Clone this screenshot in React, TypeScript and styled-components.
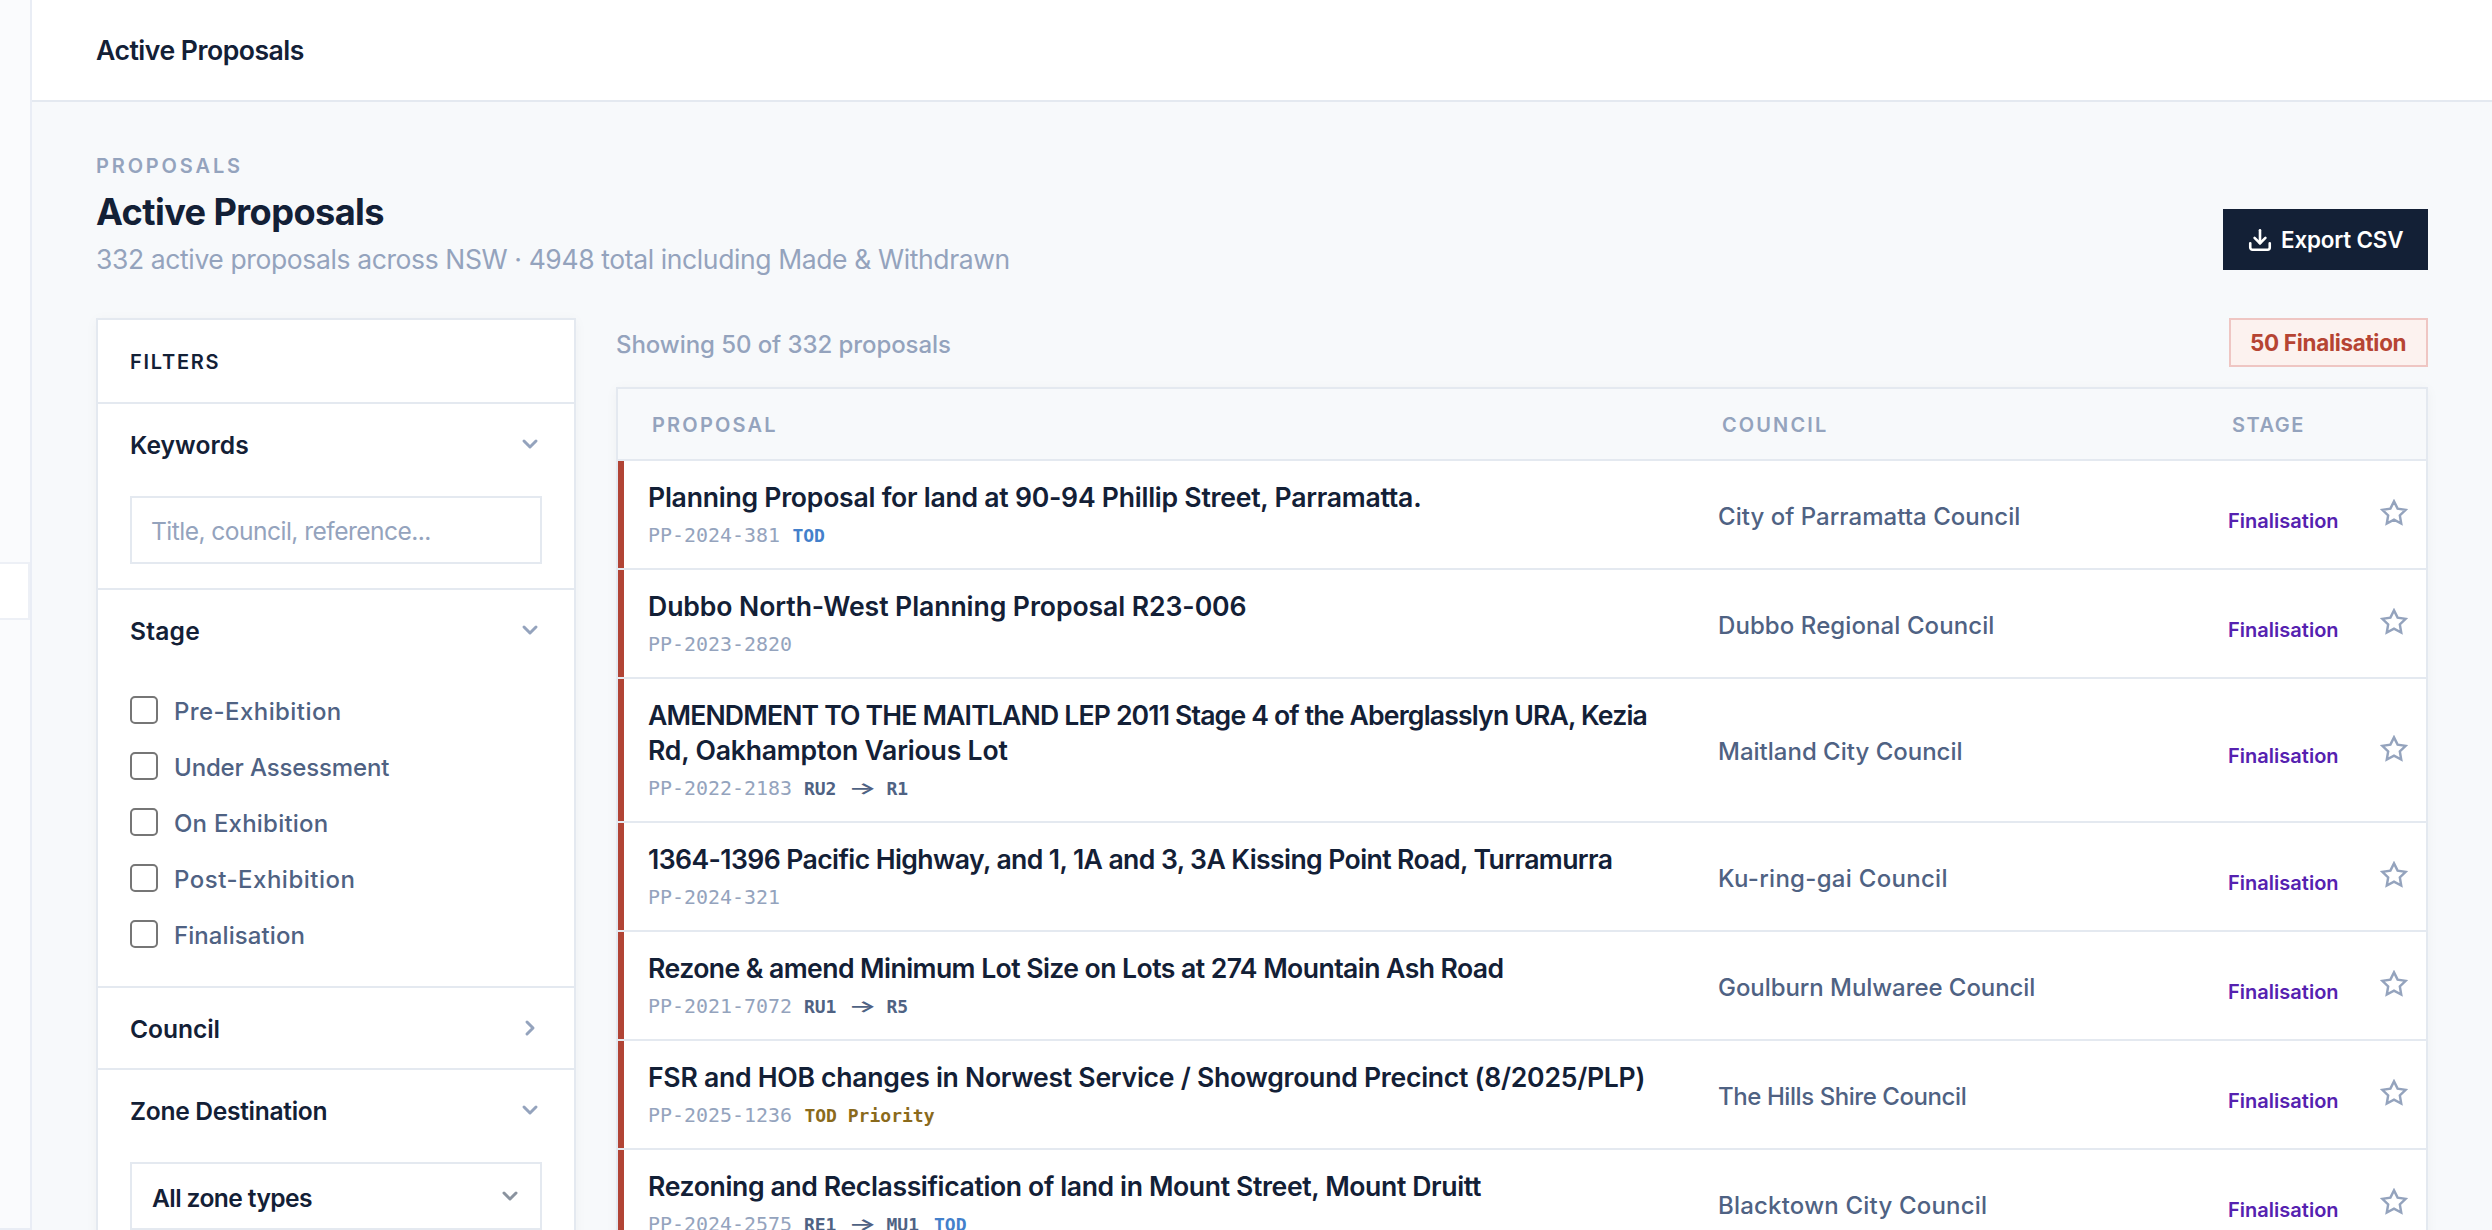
import React from "react";
import styled, { createGlobalStyle } from "styled-components";
import { ChevronDown, ChevronRight, Download } from "lucide-react";

const ink = "#132036";
const slate = "#4f6283";
const muted = "#94a3bd";
const line = "#e4e9f0";

const GlobalStyle = createGlobalStyle`
  *, *::before, *::after { box-sizing: border-box; }
  html, body { margin: 0; height: 1230px; overflow: hidden; background: #f7f9fb; }
  body { font-family: "Inter", "Noto Sans", sans-serif; color: ${ink}; }
  button, input { font-family: inherit; }
`;

const Shell = styled.div`
  display: flex;
  height: 1230px;
  overflow: hidden;
`;

const Sidebar = styled.aside`
  flex: none;
  width: 32px;
  padding-top: 562px;
  background: #fafbfd;
  border-right: 2px solid #e9edf5;
  border-bottom: 2px solid #e9edf5;
`;

const SidebarActiveItem = styled.div`
  height: 58px;
  background: #fff;
  border: 2px solid #edf0f6;
  border-left: 0;
`;

const Main = styled.main`
  flex: 1;
  min-width: 0;
  display: flex;
  flex-direction: column;
`;

const TopBar = styled.header`
  flex: none;
  display: flex;
  align-items: center;
  height: 102px;
  padding: 0 64px;
  background: #fff;
  border-bottom: 2px solid ${line};
  font-size: 26.6px;
  font-weight: 600;
  letter-spacing: -0.5px;
`;

const Content = styled.div`
  padding: 52px 64px 0;
`;

const PageHead = styled.div`
  display: flex;
  align-items: flex-end;
  justify-content: space-between;
  margin-bottom: 48px;
`;

const Eyebrow = styled.div`
  font-size: 20px;
  line-height: 24px;
  font-weight: 600;
  letter-spacing: 2.85px;
  color: ${muted};
`;

const PageTitle = styled.h1`
  margin: 12px 0 14px;
  font-size: 36.2px;
  line-height: 44px;
  font-weight: 700;
  letter-spacing: -0.6px;
`;

const Subtitle = styled.p`
  margin: 0;
  font-size: 26.5px;
  line-height: 22px;
  letter-spacing: -0.385px;
  white-space: nowrap;
  color: ${muted};
`;

const ExportButton = styled.button`
  display: flex;
  align-items: center;
  gap: 8px;
  width: 205px;
  height: 61px;
  padding: 0 0 0 24px;
  border: 0;
  background: ${ink};
  color: #fff;
  font-size: 22.4px;
  font-weight: 600;
  letter-spacing: -0.18px;
  white-space: nowrap;
`;

const Columns = styled.div`
  display: grid;
  grid-template-columns: 480px 1fr;
  gap: 40px;
  align-items: start;
`;

const Panel = styled.section`
  background: #fff;
  border: 2px solid ${line};
  box-shadow: 0 2px 12px rgba(15, 23, 42, 0.04);
`;

const FiltersHeading = styled.h2`
  display: flex;
  align-items: center;
  height: 84px;
  margin: 0;
  padding: 1px 32px 0;
  border-bottom: 2px solid ${line};
  font-size: 20px;
  font-weight: 600;
  letter-spacing: 1.75px;
`;

const FilterGroup = styled.div`
  border-bottom: 2px solid ${line};
`;

const GroupToggle = styled.button<{ $tracking: number }>`
  display: flex;
  align-items: center;
  justify-content: space-between;
  width: 100%;
  height: 80px;
  padding: 0 32px;
  border: 0;
  background: none;
  color: ${ink};
  font-size: 24.6px;
  font-weight: 600;
  letter-spacing: ${(p) => p.$tracking}px;

  span { padding-top: 2px; }
  svg { color: ${muted}; }
`;

const GroupBody = styled.div`
  padding: 12px 32px 24px;
`;

const KeywordInput = styled.input`
  display: block;
  width: 100%;
  height: 68px;
  padding: 2px 20px 0 19px;
  border: 2px solid ${line};
  border-radius: 0;
  background: #fff;
  font-size: 24.6px;
  letter-spacing: -0.55px;
  outline: none;

  &::placeholder { color: ${muted}; opacity: 1; }
`;

const SelectBox = styled.button`
  display: flex;
  align-items: center;
  justify-content: space-between;
  width: 100%;
  height: 68px;
  padding: 0 18px 0 20px;
  border: 2px solid ${line};
  background: #fff;
  color: ${ink};
  font-size: 24.6px;
  font-weight: 600;
  letter-spacing: -0.6px;

  span { padding-top: 3px; }
  svg { color: #8a939f; }
`;

const CheckRow = styled.label<{ $tracking: number }>`
  display: flex;
  align-items: center;
  gap: 16px;
  height: 56px;
  color: ${slate};
  font-size: 24px;
  font-weight: 500;
  letter-spacing: ${(p) => p.$tracking}px;

  span { padding-top: 2px; }
`;

const Checkbox = styled.input`
  appearance: none;
  width: 28px;
  height: 28px;
  margin: 0;
  border: 2px solid #767676;
  border-radius: 5px;
  background: #fff;
`;

const ResultsBar = styled.div`
  display: flex;
  align-items: center;
  justify-content: space-between;
  height: 49px;
  margin-bottom: 20px;
  color: ${muted};
  font-size: 24px;
  font-weight: 500;
  letter-spacing: -0.07px;

  > span { padding-top: 3px; }
`;

const StageBadge = styled.div`
  display: flex;
  align-items: center;
  width: 199px;
  height: 49px;
  padding-left: 19px;
  border: 2px solid #efc6c3;
  background: #fcf2ef;
  color: #b64433;
  font-size: 22.4px;
  font-weight: 700;
  letter-spacing: -0.28px;
  white-space: nowrap;
`;

const TableHead = styled.div`
  display: grid;
  grid-template-columns: 1070px 510px 1fr;
  align-items: center;
  height: 72px;
  padding: 1px 0 0 34px;
  border-bottom: 2px solid ${line};
  background: #f7f9fb;
  color: ${muted};
  font-size: 20px;
  font-weight: 600;
`;

const HeadCell = styled.div<{ $tracking: number }>`
  letter-spacing: ${(p) => p.$tracking}px;
`;

const Row = styled.div`
  position: relative;
  display: grid;
  grid-template-columns: 1070px 510px 1fr 28px;
  align-items: center;
  padding: 0 18px 0 30px;
  border-bottom: 2px solid ${line};

  &::before {
    content: "";
    position: absolute;
    left: 0;
    top: 0;
    bottom: 0;
    width: 6px;
    background: #b14435;
  }
`;

const ProposalCell = styled.div`
  padding: 19px 40px 19.4px 0;
`;

const ProposalTitle = styled.div<{ $tracking: number }>`
  font-size: 26.6px;
  line-height: 34.7px;
  font-weight: 600;
  letter-spacing: ${(p) => p.$tracking}px;
`;

const TitleLine = styled.span<{ $tracking: number }>`
  display: block;
  letter-spacing: ${(p) => p.$tracking}px;
`;

const Meta = styled.div`
  display: flex;
  align-items: baseline;
  height: 26px;
  margin-top: 8px;
  line-height: 26px;
  font-family: "DejaVu Sans Mono", monospace;
  font-size: 19.93px;
  color: ${muted};
  white-space: pre;
`;

const Tag = styled.span<{ $color: string; $gap: number }>`
  margin-left: ${(p) => p.$gap}px;
  color: ${(p) => p.$color};
  font-size: 18px;
  font-weight: 700;
`;

const Arrow = styled.span`
  display: inline-block;
  width: 50px;
  padding-left: 2px;
  text-align: center;
  font-family: "Inter", sans-serif;
  font-weight: 600;
  line-height: 20px;

  span { display: inline-block; transform: scale(1.66, 0.9); }
`;

const CouncilCell = styled.div<{ $tracking: number }>`
  padding-top: 3px;
  color: ${slate};
  font-size: 24px;
  font-weight: 500;
  letter-spacing: ${(p) => p.$tracking}px;
`;

const StageCell = styled.div`
  padding-top: 12px;
  color: #5521b0;
  font-size: 20px;
  font-weight: 600;
  letter-spacing: 0.02px;
`;

const StarIcon = styled.svg`
  display: block;
  width: 28px;
  height: 28px;
  margin-bottom: 3px;
  fill: none;
  stroke: ${muted};
  stroke-width: 2.1;
`;

type Proposal = {
  title: React.ReactNode;
  tracking: number;
  code: string;
  zones?: [string, string];
  tod?: string;
  council: string;
  councilTracking: number;
};

const proposals: Proposal[] = [
  { title: "Planning Proposal for land at 90-94 Phillip Street, Parramatta.", tracking: -0.25, code: "PP-2024-381", tod: "TOD", council: "City of Parramatta Council", councilTracking: 0.03 },
  { title: "Dubbo North-West Planning Proposal R23-006", tracking: -0.08, code: "PP-2023-2820", council: "Dubbo Regional Council", councilTracking: 0.09 },
  {
    title: (
      <>
        <TitleLine $tracking={-0.83}>AMENDMENT TO THE MAITLAND LEP 2011 Stage 4 of the Aberglasslyn URA, Kezia</TitleLine>
        <TitleLine $tracking={-0.2}>Rd, Oakhampton Various Lot</TitleLine>
      </>
    ),
    tracking: 0,
    code: "PP-2022-2183",
    zones: ["RU2", "R1"],
    council: "Maitland City Council",
    councilTracking: 0,
  },
  { title: "1364-1396 Pacific Highway, and 1, 1A and 3, 3A Kissing Point Road, Turramurra", tracking: -0.595, code: "PP-2024-321", council: "Ku-ring-gai Council", councilTracking: 0.29 },
  { title: "Rezone & amend Minimum Lot Size on Lots at 274 Mountain Ash Road", tracking: -0.565, code: "PP-2021-7072", zones: ["RU1", "R5"], council: "Goulburn Mulwaree Council", councilTracking: -0.06 },
  { title: "FSR and HOB changes in Norwest Service / Showground Precinct (8/2025/PLP)", tracking: -0.27, code: "PP-2025-1236", tod: "TOD Priority", council: "The Hills Shire Council", councilTracking: -0.43 },
  { title: "Rezoning and Reclassification of land in Mount Street, Mount Druitt", tracking: -0.375, code: "PP-2024-2575", zones: ["RE1", "MU1"], tod: "TOD", council: "Blacktown City Council", councilTracking: 0.2 },
];

const stages: [string, number][] = [
  ["Pre-Exhibition", 0.42],
  ["Under Assessment", -0.139],
  ["On Exhibition", 0.22],
  ["Post-Exhibition", 0.51],
  ["Finalisation", 0.08],
];

function Group({ label, tracking, open, children }: { label: string; tracking: number; open?: boolean; children?: React.ReactNode }) {
  const Chevron = open ? ChevronDown : ChevronRight;
  return (
    <FilterGroup>
      <GroupToggle $tracking={tracking}>
        <span>{label}</span>
        <Chevron size={24} strokeWidth={3} />
      </GroupToggle>
      {open && <GroupBody>{children}</GroupBody>}
    </FilterGroup>
  );
}

function ProposalRow({ item }: { item: Proposal }) {
  return (
    <Row>
      <ProposalCell>
        <ProposalTitle $tracking={item.tracking}>{item.title}</ProposalTitle>
        <Meta>
          <span>{item.code}</span>
          {item.zones && (
            <Tag $color={slate} $gap={12}>
              {item.zones[0]}
              <Arrow><span>→</span></Arrow>
              {item.zones[1]}
            </Tag>
          )}
          {item.tod && (
            <Tag $color={item.tod === "TOD" ? "#4380cb" : "#8a6a1c"} $gap={item.zones ? 15 : 12.5}>
              {item.tod}
            </Tag>
          )}
        </Meta>
      </ProposalCell>
      <CouncilCell $tracking={item.councilTracking}>{item.council}</CouncilCell>
      <StageCell>Finalisation</StageCell>
      <StarIcon viewBox="0 0 24 24">
        <polygon points="12 2 15.09 8.26 22 9.27 17 14.14 18.18 21.02 12 17.77 5.82 21.02 7 14.14 2 9.27 8.91 8.26" />
      </StarIcon>
    </Row>
  );
}

export default function App() {
  return (
    <>
      <GlobalStyle />
      <Shell>
        <Sidebar>
          <SidebarActiveItem />
        </Sidebar>
        <Main>
          <TopBar>Active Proposals</TopBar>
          <Content>
            <PageHead>
              <div>
                <Eyebrow>PROPOSALS</Eyebrow>
                <PageTitle>Active Proposals</PageTitle>
                <Subtitle>332 active proposals across NSW · 4948 total including Made &amp; Withdrawn</Subtitle>
              </div>
              <ExportButton>
                <Download size={26} strokeWidth={2.4} />
                Export CSV
              </ExportButton>
            </PageHead>
            <Columns>
              <Panel>
                <FiltersHeading>FILTERS</FiltersHeading>
                <Group label="Keywords" tracking={0.07} open>
                  <KeywordInput placeholder="Title, council, reference..." />
                </Group>
                <Group label="Stage" tracking={0.22} open>
                  {stages.map(([label, tracking]) => (
                    <CheckRow key={label} $tracking={tracking}>
                      <Checkbox type="checkbox" />
                      <span>{label}</span>
                    </CheckRow>
                  ))}
                </Group>
                <Group label="Council" tracking={-0.08} />
                <Group label="Zone Destination" tracking={-0.3} open>
                  <SelectBox>
                    <span>All zone types</span>
                    <ChevronDown size={24} strokeWidth={3} />
                  </SelectBox>
                </Group>
              </Panel>
              <div>
                <ResultsBar>
                  <span>Showing 50 of 332 proposals</span>
                  <StageBadge>50 Finalisation</StageBadge>
                </ResultsBar>
                <Panel>
                  <TableHead>
                    <HeadCell $tracking={2.2}>PROPOSAL</HeadCell>
                    <HeadCell $tracking={2.1}>COUNCIL</HeadCell>
                    <HeadCell $tracking={1.5}>STAGE</HeadCell>
                  </TableHead>
                  {proposals.map((item) => (
                    <ProposalRow key={item.code} item={item} />
                  ))}
                </Panel>
              </div>
            </Columns>
          </Content>
        </Main>
      </Shell>
    </>
  );
}
